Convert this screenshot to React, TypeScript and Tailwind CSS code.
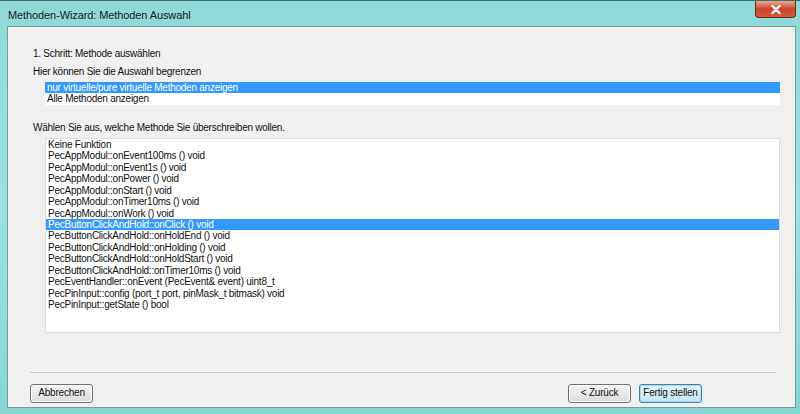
import React from 'react';

const font = { fontFamily: '"Liberation Sans", Arial, sans-serif' };

const methods = [
  'Keine Funktion',
  'PecAppModul::onEvent100ms () void',
  'PecAppModul::onEvent1s () void',
  'PecAppModul::onPower () void',
  'PecAppModul::onStart () void',
  'PecAppModul::onTimer10ms () void',
  'PecAppModul::onWork () void',
  'PecButtonClickAndHold::onClick () void',
  'PecButtonClickAndHold::onHoldEnd () void',
  'PecButtonClickAndHold::onHolding () void',
  'PecButtonClickAndHold::onHoldStart () void',
  'PecButtonClickAndHold::onTimer10ms () void',
  'PecEventHandler::onEvent (PecEvent& event) uint8_t',
  'PecPinInput::config (port_t port, pinMask_t bitmask) void',
  'PecPinInput::getState () bool',
];

function Row({ text, selected }: { text: string; selected?: boolean }) {
  return (
    <div
      className={
        'h-[11.45px] leading-[11.45px] pl-[2px] whitespace-nowrap ' +
        (selected ? 'bg-[#3399ff] text-white' : 'text-[#111]')
      }
    >
      {text}
    </div>
  );
}

function Button({ label, primary }: { label: string; primary?: boolean }) {
  return (
    <button
      className={
        'h-[19px] w-[63px] rounded-[3px] border text-[10px] leading-none tracking-[-0.2px] ' +
        (primary
          ? 'border-[#3c7fb1] bg-gradient-to-b from-[#eaf6fd] to-[#c4e5f6] shadow-[inset_0_0_0_1px_#a7d9f5]'
          : 'border-[#707070] bg-gradient-to-b from-[#f4f4f4] to-[#dcdcdc] shadow-[inset_0_0_0_1px_#fcfcfc]')
      }
    >
      {label}
    </button>
  );
}

export default function App() {
  return (
    <div className="w-[800px] h-[414px] overflow-hidden flex flex-col bg-gradient-to-b from-[#8ed9d6] via-[#9ae3e2] to-[#86d5d3] border-t border-[#3d6f6e]" style={font}>
      {/* title bar */}
      <div className="h-[25px] flex items-start relative">
        <span className="pl-[8px] pt-[6px] text-[11px] tracking-[-0.1px] text-[#1a1a1a]">Methoden-Wizard: Methoden Auswahl</span>
        <div className="absolute right-[4px] top-0 w-[41px] h-[17px] rounded-b-[4px] border border-[#6b2a1c] border-t-0 bg-gradient-to-b from-[#e8a593] via-[#c8462a] to-[#d5573a] flex items-center justify-center">
          <svg width="10" height="9" viewBox="0 0 10 9">
            <path d="M1.5 1 L8.5 8 M8.5 1 L1.5 8" stroke="white" strokeWidth="2.2" strokeLinecap="round" />
          </svg>
        </div>
      </div>

      {/* client */}
      <div className="ml-[7px] mr-[4px] h-[382px] border border-[#7a9a9a] bg-[#f0f0f0] flex flex-col text-[10px] tracking-[-0.25px] text-[#111]">
        <div className="pl-[25px] pt-[21px] leading-[12px]">1. Schritt: Methode auswählen</div>
        <div className="pl-[25px] pt-[6px] leading-[12px]">Hier können Sie die Auswahl begrenzen</div>
        <div className="ml-[37px] mr-[15px] mt-[4px] bg-white">
          <Row text="nur virtuelle/pure virtuelle Methoden anzeigen" selected />
          <Row text="Alle Methoden anzeigen" />
        </div>
        <div className="pl-[25px] pt-[17px] leading-[12px]">Wählen Sie aus, welche Methode Sie überschreiben wollen.</div>
        <div className="ml-[37px] mr-[15px] mt-[4px] h-[195px] bg-white border border-[#dcdcdc]">
          {methods.map((m, i) => (
            <Row key={i} text={m} selected={i === 7} />
          ))}
        </div>
        <div className="ml-[22px] mr-[19px] mt-[39px] h-[2px] border-t border-[#c8c8c8] border-b-white" />
        <div className="flex items-center px-[22px] mt-[10px]">
          <Button label="Abbrechen" />
          <div className="flex-1" />
          <Button label="< Zurück" />
          <div className="w-[8px]" />
          <Button label="Fertig stellen" primary />
          <div className="w-[71px]" />
        </div>
      </div>
    </div>
  );
}
